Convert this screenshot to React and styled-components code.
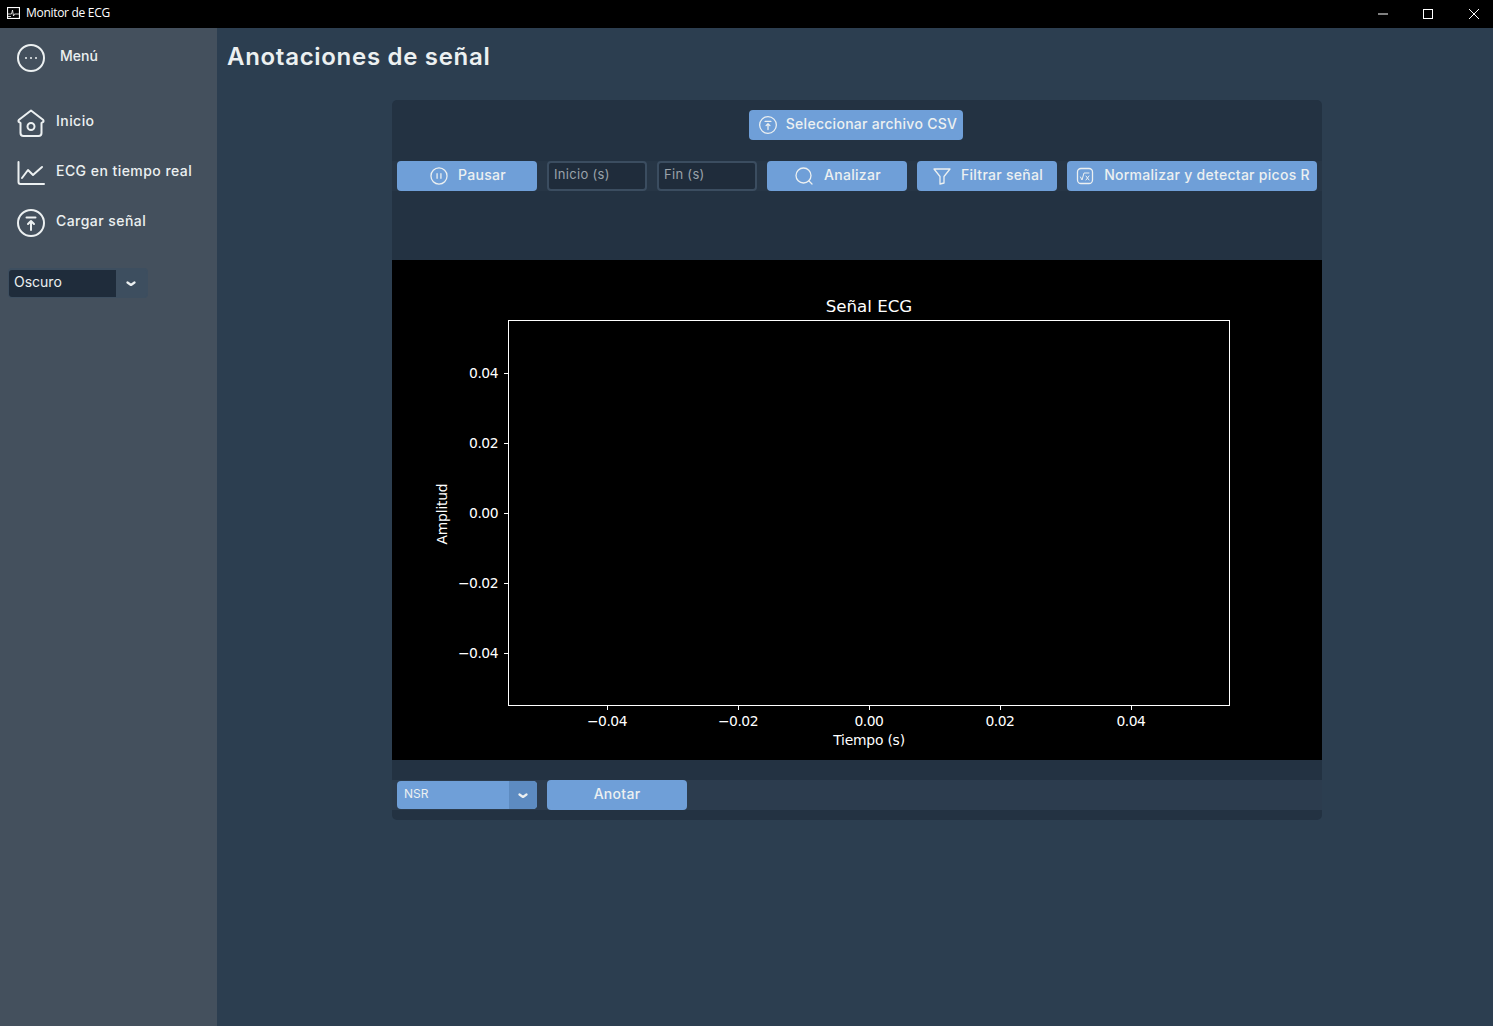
import React from "react";
import styled, { createGlobalStyle } from "styled-components";

const GlobalStyle = createGlobalStyle`
  html, body {
    margin: 0;
    height: 100%;
    background: #2c3e50;
    overflow: hidden;
  }
  * {
    box-sizing: border-box;
  }
`;

const UI_FONT = `Inter, "Liberation Sans", sans-serif`;

const Window = styled.div`
  display: flex;
  flex-direction: column;
  width: 1493px;
  height: 1026px;
  font-family: ${UI_FONT};
  color: #ecf0f1;
`;

const TitleBar = styled.header`
  display: flex;
  align-items: center;
  height: 28px;
  flex: none;
  padding-left: 7px;
  background: #000;
  color: #fff;
  font-family: "Open Sans", sans-serif;
  font-size: 12px;
  letter-spacing: -0.3px;
  padding-bottom: 3px;
`;

const WindowTitle = styled.span`
  margin-left: 6px;
  flex: 1;
`;

const WindowButton = styled.span`
  display: flex;
  align-items: center;
  justify-content: center;
  width: 45px;
  height: 28px;
  margin-top: 3px;
  &:last-child {
    width: 38px;
    margin-left: 5px;
  }
`;

const Body = styled.div`
  display: flex;
  flex: 1;
  min-height: 0;
`;

const Sidebar = styled.aside`
  display: flex;
  flex-direction: column;
  flex: none;
  width: 217px;
  background: #44505d;
  padding: 16px 0 0 8px;
`;

const MenuRow = styled.div`
  display: flex;
  align-items: center;
  height: 28px;
  padding-left: 9px;
  gap: 15px;
  font-size: 14px;
  font-weight: 500;
  margin-bottom: 26px;
  span {
    padding-bottom: 5px;
  }
`;

const NavItem = styled.div`
  display: flex;
  align-items: center;
  height: 50px;
  padding-left: 9px;
  gap: 11px;
  font-size: 14px;
  font-weight: 500;
  letter-spacing: 0.45px;
  span {
    padding-bottom: 5px;
  }
`;

const ThemeSelect = styled.div`
  display: flex;
  width: 140px;
  height: 30px;
  margin-top: 20px;
  padding: 2px 1px 1px;
  border-radius: 4px;
  background: #3d4e5f;
`;

const ThemeValue = styled.div`
  flex: 1;
  background: #1f2c3b;
  border-radius: 3px 0 0 3px;
  font-size: 14px;
  font-weight: 400;
  line-height: 24px;
  padding-left: 5px;
`;

const SelectArrow = styled.div`
  display: flex;
  align-items: center;
  justify-content: center;
  width: ${(p) => p.$width}px;
  padding-right: 1px;
  background: ${(p) => p.$bg};
  border-radius: 0 4px 4px 0;
`;

const Main = styled.main`
  flex: 1;
  min-width: 0;
  padding: 0 0 0 10px;
`;

const PageTitle = styled.h1`
  margin: 0;
  height: 72px;
  font-size: 24px;
  font-weight: 600;
  line-height: 58px;
  letter-spacing: 0.7px;
`;

const Panel = styled.section`
  display: flex;
  flex-direction: column;
  width: 930px;
  height: 720px;
  margin-left: 165px;
  background: #233242;
  border-radius: 5px;
`;

const UploadRow = styled.div`
  display: flex;
  justify-content: center;
  padding: 10px 3px 0 0;
  height: 61px;
  flex: none;
`;

const Toolbar = styled.div`
  display: flex;
  gap: 10px;
  height: 30px;
  padding: 0 5px;
  flex: none;
  background: #273646;
`;

const Spacer = styled.div`
  height: 69px;
  flex: none;
`;

const Button = styled.button`
  display: flex;
  align-items: center;
  justify-content: center;
  gap: ${(p) => p.$gap || 10}px;
  width: ${(p) => p.$width}px;
  height: 30px;
  padding: 0 0 0 ${(p) => p.$shift ?? 2}px;
  border: none;
  border-radius: 4px;
  background: #6f9fd8;
  color: #ecf0f1;
  font-family: ${UI_FONT};
  font-size: 14px;
  font-weight: 500;
  letter-spacing: 0.28px;
`;

const ButtonLabel = styled.span`
  padding-bottom: 3px;
`;

const NumberInput = styled.div`
  width: 100px;
  height: 30px;
  padding-left: 5px;
  border: 2px solid #3b4d60;
  border-radius: 4px;
  background: #1f2c3b;
  color: #9aa2aa;
  font-size: 13px;
  letter-spacing: 0.3px;
  line-height: 22px;
`;

const ChartFrame = styled.div`
  height: 500px;
  flex: none;
  background: #000;
`;

const ChartSvg = styled.svg`
  display: block;
  font-family: "DejaVu Sans", sans-serif;
  text {
    fill: #fff;
  }
`;

const TickLabel = styled.text`
  font-size: 13.89px;
  letter-spacing: -0.5px;
`;

const AxisLabel = styled.text`
  font-size: 13.89px;
  letter-spacing: -0.2px;
  text-anchor: middle;
`;

const FooterGap = styled.div`
  height: 20px;
  flex: none;
`;

const AnnotateRow = styled.div`
  display: flex;
  align-items: center;
  gap: 10px;
  height: 30px;
  padding: 0 5px;
  flex: none;
  background: #2c3c4e;
`;

const LabelSelect = styled.div`
  display: flex;
  width: 140px;
  height: 28px;
  border-radius: 4px;
  overflow: hidden;
  background: #6f9fd8;
`;

const LabelValue = styled.div`
  flex: 1;
  padding-left: 7px;
  font-size: 12px;
  line-height: 26px;
`;

const Icon = ({ size = 28, vb = 28, children }) => (
  <svg width={size} height={size} viewBox={`0 0 ${vb} ${vb}`} fill="none" stroke="#ecf0f1" strokeWidth="2" strokeLinecap="round" strokeLinejoin="round">
    {children}
  </svg>
);

const UploadIcon = ({ size }) => (
  <Icon size={size}>
    <circle cx="14" cy="14" r="13" />
    <path d="M9.500 8.500h9M14 21v-9M11 15l3-3 3 3" />
  </Icon>
);

const PauseIcon = () => (
  <Icon size={18}>
    <circle cx="14" cy="14" r="12.500" />
    <path d="M11 10.500v7M17 10.500v7" />
  </Icon>
);

const Chevron = () => (
  <svg width="10" height="7" viewBox="0 0 10 7" fill="none" stroke="#ecf0f1" strokeWidth="2.200" strokeLinecap="round" strokeLinejoin="round">
    <path d="M1.500 2.500l3.500 2.500 3.500-2.500" />
  </svg>
);

const xTicks = [
  [607, "\u22120.04"],
  [738, "\u22120.02"],
  [869, "0.00"],
  [1000, "0.02"],
  [1131, "0.04"],
];

const yTicks = [
  [373, "0.04"],
  [443, "0.02"],
  [513, "0.00"],
  [583, "\u22120.02"],
  [653, "\u22120.04"],
];

// matplotlib figure, coords are page coords shifted by the frame origin
const EcgChart = () => (
  <ChartSvg width="930" height="500" viewBox="392 260 930 500">
    <text x="869" y="312" fontSize="16.670" textAnchor="middle">Señal ECG</text>
    <rect x="508.500" y="320.500" width="721" height="385" fill="none" stroke="#fff" />
    {xTicks.map(([x, label]) => (
      <g key={x}>
        <line x1={x + 0.5} x2={x + 0.5} y1="706" y2="710" stroke="#fff" />
        <TickLabel x={x} y="726" textAnchor="middle">{label}</TickLabel>
      </g>
    ))}
    {yTicks.map(([y, label]) => (
      <g key={y}>
        <line x1="504" x2="508" y1={y + 0.5} y2={y + 0.5} stroke="#fff" />
        <TickLabel x="498" y={y + 5} textAnchor="end">{label}</TickLabel>
      </g>
    ))}
    <AxisLabel x="869" y="745">Tiempo (s)</AxisLabel>
    <AxisLabel transform="translate(447 514) rotate(-90)">Amplitud</AxisLabel>
  </ChartSvg>
);

export default function App() {
  return (
    <>
      <GlobalStyle />
      <Window>
        <TitleBar>
          <svg width="13" height="12" viewBox="0 0 13 12" fill="none" stroke="#fff">
            <rect x="0.500" y="0.500" width="12" height="11" strokeWidth="1.200" />
            <path d="M1 7h3.500l1-4 1 6 1-2h4.500M1 9.500h3" strokeWidth="0.800" />
          </svg>
          <WindowTitle>Monitor de ECG</WindowTitle>
          <WindowButton>
            <svg width="10" height="2" viewBox="0 0 10 2"><path d="M0 1h10" stroke="#fff" /></svg>
          </WindowButton>
          <WindowButton>
            <svg width="10" height="10" viewBox="0 0 10 10" fill="none"><rect x="0.500" y="0.500" width="9" height="9" stroke="#fff" /></svg>
          </WindowButton>
          <WindowButton>
            <svg width="10" height="10" viewBox="0 0 10 10"><path d="M0 0l10 10M10 0L0 10" stroke="#fff" /></svg>
          </WindowButton>
        </TitleBar>
        <Body>
          <Sidebar>
            <MenuRow>
              <Icon>
                <circle cx="14" cy="14" r="13" />
                <path d="M9 14h.01M14 14h.01M19 14h.01" />
              </Icon>
              <span>Menú</span>
            </MenuRow>
            <NavItem>
              <Icon>
                <path d="M14 1.500l12 9.300c.8.700.7 1.900-.2 2.300L24.500 14v10a3 3 0 0 1-3 3h-15a3 3 0 0 1-3-3V14l-1.300-.9c-.9-.4-1-1.600-.2-2.300z" />
                <circle cx="14" cy="17.500" r="3.500" />
              </Icon>
              <span>Inicio</span>
            </NavItem>
            <NavItem>
              <Icon>
                <path d="M1.500 3v20a2 2 0 0 0 2 2h23.500M5 19l6-8 5 5 9-8" />
              </Icon>
              <span>ECG en tiempo real</span>
            </NavItem>
            <NavItem>
              <UploadIcon />
              <span>Cargar señal</span>
            </NavItem>
            <ThemeSelect>
              <ThemeValue>Oscuro</ThemeValue>
              <SelectArrow $width={31} $bg="#3d4e5f"><Chevron /></SelectArrow>
            </ThemeSelect>
          </Sidebar>
          <Main>
            <PageTitle>Anotaciones de señal</PageTitle>
            <Panel>
              <UploadRow>
                <Button $width={214} $gap={9} $shift={5}>
                  <UploadIcon size={18} />
                  <ButtonLabel>Seleccionar archivo CSV</ButtonLabel>
                </Button>
              </UploadRow>
              <Toolbar>
                <Button $width={140} $gap={10}>
                  <PauseIcon />
                  <ButtonLabel>Pausar</ButtonLabel>
                </Button>
                <NumberInput>Inicio (s)</NumberInput>
                <NumberInput>Fin (s)</NumberInput>
                <Button $width={140} $gap={11}>
                  <Icon size={18} vb={18}>
                    <circle cx="8.500" cy="8.500" r="7.500" strokeWidth="1.300" />
                    <path d="M14 14l3 3" strokeWidth="1.300" />
                  </Icon>
                  <ButtonLabel>Analizar</ButtonLabel>
                </Button>
                <Button $width={140} $gap={10}>
                  <Icon size={18} vb={18}>
                    <path d="M1 2h16l-6 7.500v6.500l-4 1V9.500z" strokeWidth="1.300" />
                  </Icon>
                  <ButtonLabel>Filtrar señal</ButtonLabel>
                </Button>
                <Button $width={250} $gap={10}>
                  <Icon size={18} vb={18}>
                    <rect x="1.500" y="1.500" width="15" height="15" rx="3.500" strokeWidth="1.300" />
                    <path d="M4.500 10l1.500 3 2-7h5M10 9l3 4M13 9l-3 4" strokeWidth="1" />
                  </Icon>
                  <ButtonLabel>Normalizar y detectar picos R</ButtonLabel>
                </Button>
              </Toolbar>
              <Spacer />
              <ChartFrame>
                <EcgChart />
              </ChartFrame>
              <FooterGap />
              <AnnotateRow>
                <LabelSelect>
                  <LabelValue>NSR</LabelValue>
                  <SelectArrow $width={28} $bg="#5d8bc1"><Chevron /></SelectArrow>
                </LabelSelect>
                <Button $width={140} $shift={0}><ButtonLabel>Anotar</ButtonLabel></Button>
              </AnnotateRow>
            </Panel>
          </Main>
        </Body>
      </Window>
    </>
  );
}
